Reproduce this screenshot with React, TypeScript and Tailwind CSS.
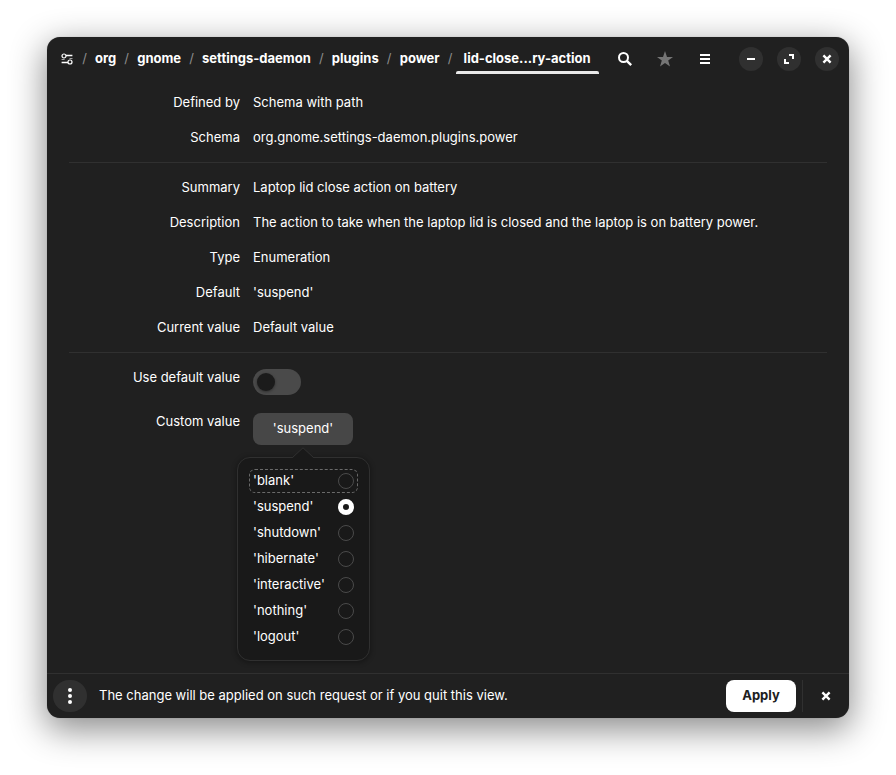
import { useState } from "react";
import type { ReactNode } from "react";

const crumbs = ["org", "gnome", "settings-daemon", "plugins", "power"];
const options = ["blank", "suspend", "shutdown", "hibernate", "interactive", "nothing", "logout"];

function Row({ label, children }: { label: string; children: ReactNode }) {
  return (
    <div className="grid grid-cols-[171px_1fr] gap-x-[13px] leading-[35px]">
      <dt className="text-right">{label}</dt>
      <dd>{children}</dd>
    </div>
  );
}

function CloseIcon() {
  return (
    <svg width="16" height="16" viewBox="0 0 16 16" fill="none" stroke="currentColor" strokeWidth="2.4">
      <path d="M4.4 4.4l7.2 7.2M11.6 4.4l-7.2 7.2" />
    </svg>
  );
}

function Slash() {
  return <span className="w-[11px] shrink-0 text-center font-normal leading-7 text-[#8c8c8c]">/</span>;
}

function Header() {
  const tool = "flex h-8 w-[34px] items-center justify-center";
  const round = "flex size-6 items-center justify-center rounded-full bg-[#303030]";
  return (
    <header className="flex h-11 items-center pr-[10px] pl-2">
      <nav aria-label="Path" className="flex h-[30px] min-w-0 flex-1 items-start font-bold">
        <button aria-label="Root" className="flex h-[30px] w-6 shrink-0 items-center justify-center">
          <svg width="16" height="16" viewBox="0 0 16 16" fill="none" stroke="currentColor">
            <circle cx="5" cy="5" r="2" strokeWidth="1.2" />
            <circle cx="11" cy="11" r="2" strokeWidth="1.2" />
            <path d="M7 4.500h6.400M2.600 11.500H9" strokeWidth="1.600" />
            <path d="M10.500 7.500h3M2.600 8.500h3" strokeWidth="1" opacity=".6" />
          </svg>
        </button>
        {crumbs.map((name) => (
          <span key={name} className="flex items-start">
            <Slash />
            <button className="px-[5px] font-bold leading-7">{name}</button>
          </span>
        ))}
        <Slash />
        <button aria-current="page" className="relative min-w-[143px] px-[5px] pb-[2px] text-center font-bold leading-7">
          lid-close...ry-action
          <span className="absolute inset-x-0 bottom-0 h-[3px] rounded-t-[2px] bg-[#e9e9e9]" />
        </button>
      </nav>
      <div className="flex items-center gap-[6px]">
        <button aria-label="Search" className={tool}>
          <svg width="16" height="16" viewBox="0 0 16 16" fill="none" stroke="currentColor" strokeWidth="2">
            <circle cx="6.5" cy="6.5" r="4.5" />
            <path d="M9.8 9.8l4.4 4.4" strokeWidth="2.4" />
          </svg>
        </button>
        <button aria-label="Bookmark" className={`${tool} text-[#757575]`}>
          <svg width="16" height="16" viewBox="0 0 16 16" fill="currentColor">
            <path d="M8 0l2 6h6l-4.8 3.6L13 15.6 8 12l-5 3.6 1.8-6L0 6h6z" />
          </svg>
        </button>
        <button aria-label="Menu" className={tool}>
          <svg width="16" height="16" viewBox="0 0 16 16" fill="currentColor">
            <path d="M3 3h10v2H3zM3 7h10v2H3zM3 11h10v2H3z" />
          </svg>
        </button>
      </div>
      <div className="ml-[17px] flex items-center gap-[14px]">
        <button aria-label="Minimize" className={round}>
          <svg width="16" height="16" viewBox="0 0 16 16" fill="currentColor">
            <path d="M4 7h8v2H4z" />
          </svg>
        </button>
        <button aria-label="Maximize" className={round}>
          <svg width="16" height="16" viewBox="0 0 16 16" fill="currentColor">
            <path d="M8 3h5v5h-2V5H8zM3 8h2v3h3v2H3z" />
          </svg>
        </button>
        <button aria-label="Close" className={round}>
          <CloseIcon />
        </button>
      </div>
    </header>
  );
}

function ValuePopover({ value, onChange }: { value: string; onChange: (v: string) => void }) {
  return (
    <div
      role="radiogroup"
      aria-label="Custom value"
      className="absolute top-[44px] -left-4 w-[133px] rounded-[13px] border border-[#303030] bg-[#191919] p-[11px] shadow-[0_1px_5px_1px_rgba(0,0,0,0.3)]"
    >
      <svg className="absolute -top-[11px] left-[53px]" width="24" height="12" viewBox="0 0 24 12">
        <path d="M1 11.5L12 1l11 10.5v.5H1z" fill="#191919" />
        <path d="M0 10.5h1.5L12 .8l10.500 9.700H24" fill="none" stroke="#303030" />
      </svg>
      <div className="flex flex-col gap-[2px]">
        {options.map((option, i) => (
          <label
            key={option}
            className={`flex h-6 items-center justify-between px-1 ${
              i === 0 ? "rounded-[6px] border border-dashed border-[#6a6a6a] px-[3px]" : ""
            }`}
          >
            <span className="pb-[2px] leading-[22px]">'{option}'</span>
            <input
              type="radio"
              name="custom-value"
              checked={value === option}
              onChange={() => onChange(option)}
              className="size-4 appearance-none rounded-full border border-[#4a4a4a] checked:border-[5px] checked:border-white"
            />
          </label>
        ))}
      </div>
    </div>
  );
}

export default function App() {
  const [value, setValue] = useState("suspend");
  const [useDefault, setUseDefault] = useState(false);
  return (
    <div className="flex min-h-screen bg-white px-[47px] pt-[37px] pb-[57px] font-[Inter,sans-serif] text-[13px] text-white">
      <div className="flex min-w-0 flex-1 flex-col rounded-[13px] bg-[#202020] shadow-[0_0_1px_rgba(0,0,0,0.3),0_10px_34px_2px_rgba(0,0,0,0.45)]">
        <Header />
        <main className="flex-1 px-[22px] pt-1">
          <dl>
            <Row label="Defined by">Schema with path</Row>
            <Row label="Schema">org.gnome.settings-daemon.plugins.power</Row>
          </dl>
          <hr className="my-[7px] border-[#303030]" />
          <dl>
            <Row label="Summary">Laptop lid close action on battery</Row>
            <Row label="Description">The action to take when the laptop lid is closed and the laptop is on battery power.</Row>
            <Row label="Type">Enumeration</Row>
            <Row label="Default">'suspend'</Row>
            <Row label="Current value">Default value</Row>
          </dl>
          <hr className="my-[7px] border-[#303030]" />
          <div className="grid grid-cols-[171px_1fr] items-start gap-x-[13px] gap-y-[9px] leading-[35px]">
            <label htmlFor="use-default" className="text-right">
              Use default value
            </label>
            <input
              id="use-default"
              type="checkbox"
              role="switch"
              checked={useDefault}
              onChange={(e) => setUseDefault(e.target.checked)}
              className="mt-[9px] flex h-[26px] w-12 appearance-none rounded-full bg-[#4a4a4a] p-1 before:size-[18px] before:rounded-full before:bg-[#1b1b1b] before:shadow-[0_1px_3px_rgba(0,0,0,0.4)] before:content-[''] checked:justify-end"
            />
            <label htmlFor="custom-value" className="text-right">
              Custom value
            </label>
            <div className="relative mt-[9px] w-[100px]">
              <button
                id="custom-value"
                aria-haspopup="true"
                aria-expanded="true"
                className="block h-8 w-full rounded-[8px] bg-[#474747] pb-[2px] leading-[30px]"
              >
                '{value}'
              </button>
              <ValuePopover value={value} onChange={setValue} />
            </div>
          </div>
        </main>
        <footer className="flex items-center border-t border-[#303030] p-[6px]">
          <button aria-label="More" className="flex h-8 w-[34px] items-center justify-center rounded-full bg-[#303030]">
            <svg width="16" height="16" viewBox="0 0 16 16" fill="currentColor">
              <circle cx="8" cy="2" r="2" />
              <circle cx="8" cy="8" r="2" />
              <circle cx="8" cy="14" r="2" />
            </svg>
          </button>
          <p className="min-w-0 flex-1 px-3">The change will be applied on such request or if you quit this view.</p>
          <button className="h-8 w-[70px] rounded-[8px] bg-white font-bold text-[#202020]">Apply</button>
          <div className="mx-[6px] h-8 w-px bg-[#303030]" />
          <button aria-label="Dismiss" className="flex h-8 w-[34px] items-center justify-center">
            <CloseIcon />
          </button>
        </footer>
      </div>
    </div>
  );
}
